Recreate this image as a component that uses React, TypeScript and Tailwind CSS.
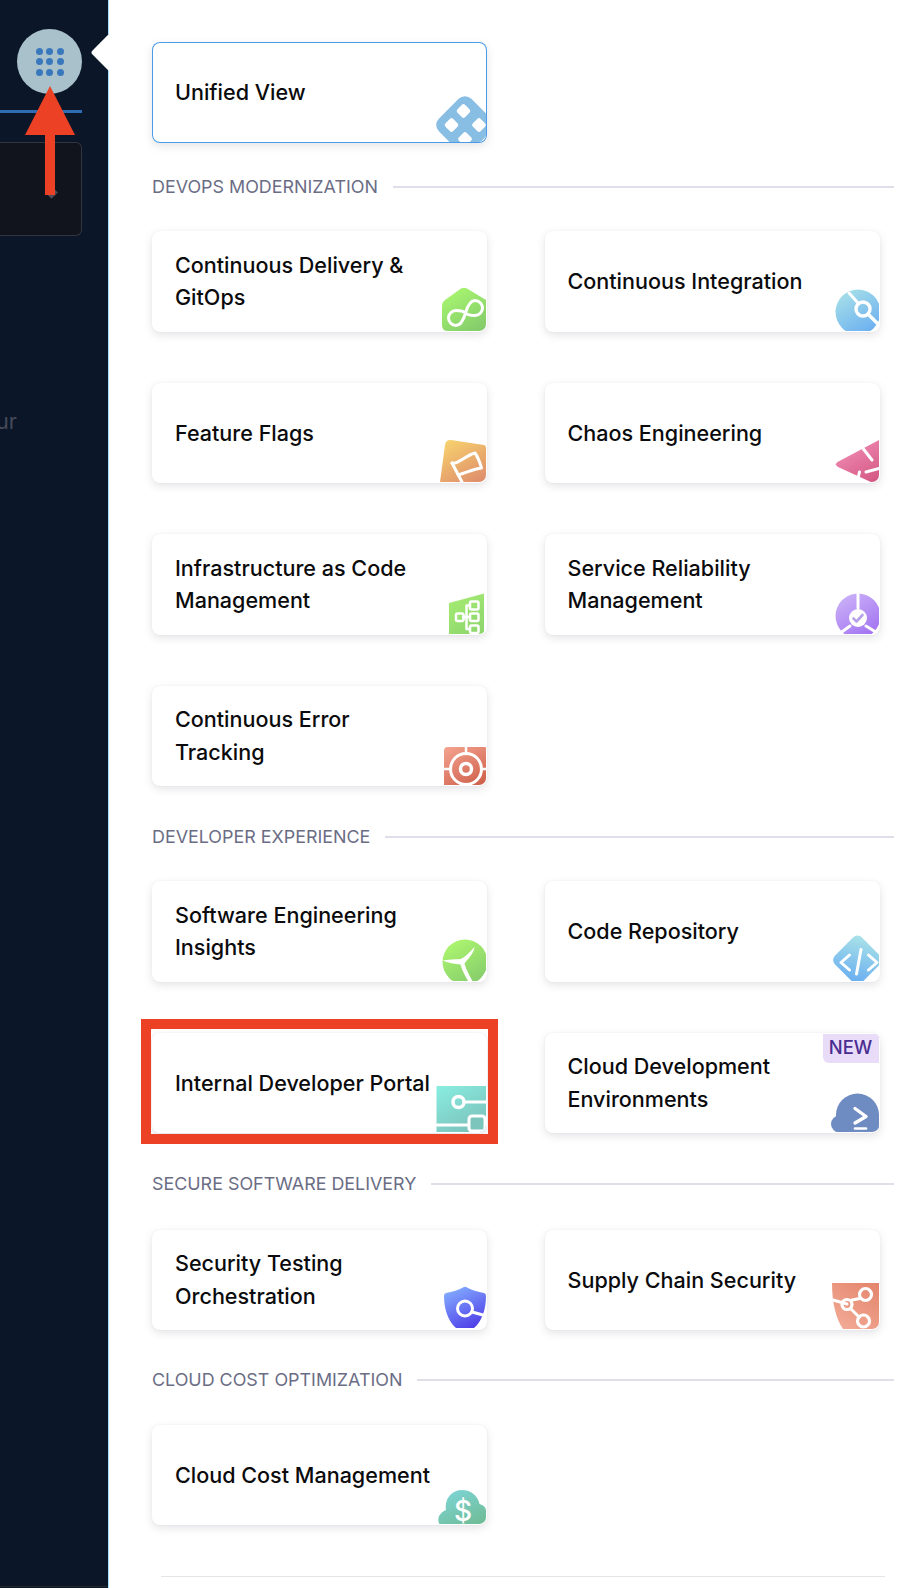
import React from "react";

function Grad({ id, from, to, x1 = 0.2, y1 = 0, x2 = 0.8, y2 = 1 }: { id: string; from: string; to: string; x1?: number; y1?: number; x2?: number; y2?: number }) {
  return (
    <defs>
      <linearGradient id={id} x1={x1} y1={y1} x2={x2} y2={y2}>
        <stop offset="0" stopColor={from} />
        <stop offset="1" stopColor={to} />
      </linearGradient>
    </defs>
  );
}

function Ico({ children }: { children: React.ReactNode }) {
  return (
    <svg
      viewBox="0 0 50 50"
      className="absolute right-[1px] bottom-[1px] h-[50px] w-[50px] rounded-br-[7px]"
      fill="none"
      stroke="#fff"
      strokeLinecap="round"
      strokeLinejoin="round"
    >
      {children}
    </svg>
  );
}

const hole = (cx: number, cy: number) => (
  <rect key={cx + "-" + cy} x={cx - 5.5} y={cy - 5.5} width="11" height="11" rx="2.5" fill="#fff" stroke="none" transform={`rotate(45 ${cx} ${cy})`} />
);

const IconUnified = () => (
  <Ico>
    <rect x="6" y="10" width="46" height="46" rx="9" fill="#88bde4" stroke="none" transform="rotate(45 29 33)" />
    {hole(27.5, 19)}
    {hole(15.5, 33)}
    {hole(43, 33)}
    {hole(29, 47)}
  </Ico>
);

const IconCD = () => (
  <Ico>
    <Grad id="g-cd" from="#a9f770" to="#84cb6b" />
    <path d="M25 7.5 Q28 6 31 7.5 L50 19 V50 H12 Q6 50 6 44 V24 Q6 21 9 19 Z" fill="url(#g-cd)" stroke="none" />
    <path d="M29.5 32 C27 29.5 24 29.5 20 29.5 A7.5 7.5 0 0 0 20 44.5 C25 44.5 27.5 39 29.5 32 C31.5 25 34 19.5 39 19.5 A7.5 7.5 0 0 1 39 34.5 C35 34.5 32 34.5 29.5 32 Z" strokeWidth="3" />
  </Ico>
);

const IconCI = () => (
  <Ico>
    <Grad id="g-ci" from="#a7e0e8" to="#69adf1" />
    <circle cx="29" cy="31" r="22.5" fill="url(#g-ci)" stroke="none" />
    <path d="M20 12 L29 22" strokeWidth="3" />
    <circle cx="34" cy="28" r="7" strokeWidth="3.4" />
    <path d="M39 33 L50 44" strokeWidth="3.4" />
  </Ico>
);

const IconFF = () => (
  <Ico>
    <Grad id="g-ff" from="#f7d16d" to="#df8f6c" />
    <path d="M15 8 L48 13 Q50 13.5 50 16 V50 H4 L9 13 Q10 7.5 15 8 Z" fill="url(#g-ff)" stroke="none" />
    <path d="M16 31 C22 33 28 24 39 21 C42 25 44 31 45.5 36 C37 37 30 41 22 43" strokeWidth="3" />
    <path d="M16 31 L26 50" strokeWidth="3" />
  </Ico>
);

const IconChaos = () => (
  <Ico>
    <Grad id="g-ch" from="#f28fb7" to="#d45a84" />
    <path d="M8.5 30 L50 8 V51 H44 L9 35 Q5 32.5 8.5 30 Z" fill="url(#g-ch)" stroke="none" />
    <path d="M34 16.5 L43 28 M30.5 40 L28 50 M37 40 L50 36.5" strokeWidth="3" />
  </Ico>
);

const IconIaC = () => (
  <Ico>
    <Grad id="g-iac" from="#a5ec72" to="#8ed56e" />
    <path d="M13 19 L48 9.5 V50 H13 Z" fill="url(#g-iac)" stroke="none" />
    <path d="M27 33 H34 M30.5 21.5 V45 M30.5 21.5 H34 M30.5 45 H34" strokeWidth="2.5" />
    <rect x="34" y="17.5" width="8.5" height="8" rx="1.5" strokeWidth="2.5" />
    <rect x="20" y="29.5" width="7.5" height="7.5" rx="1.5" strokeWidth="2.5" />
    <rect x="34" y="29.5" width="8.5" height="7.5" rx="1.5" strokeWidth="2.5" />
    <rect x="34" y="41.5" width="8.5" height="7.5" rx="1.5" strokeWidth="2.5" />
  </Ico>
);

const IconSRM = () => (
  <Ico>
    <Grad id="g-srm" from="#cbb2f8" to="#a06ff1" />
    <circle cx="29" cy="32" r="22.5" fill="url(#g-srm)" stroke="none" />
    <path d="M29 8 V24 M10 50 L21 42 M50 50 L37 42" strokeWidth="3" />
    <circle cx="29" cy="34" r="9" fill="#fff" stroke="none" />
    <path d="M24.5 34.5 L27.5 37.5 L33.5 31" stroke="#b9a3e8" strokeWidth="2.6" />
  </Ico>
);

const IconCET = () => (
  <Ico>
    <Grad id="g-cet" from="#f19e8a" to="#cd5d48" />
    <rect x="8" y="12" width="44" height="42" rx="4" fill="url(#g-cet)" stroke="none" />
    <circle cx="30" cy="34" r="15.5" strokeWidth="3" />
    <circle cx="30" cy="34" r="5.5" strokeWidth="3.5" />
    <path d="M30 12 V19 M30 49 V52 M8 34 H15 M45 34 H50" strokeWidth="2.5" />
  </Ico>
);

const IconSEI = () => (
  <Ico>
    <Grad id="g-sei" from="#aef76f" to="#84cb6b" />
    <circle cx="29" cy="31" r="22.5" fill="url(#g-sei)" stroke="none" />
    <path d="M25 28 C29 26 34 21 38.5 16 C38 22 32 28 28.5 32.5 C30 38 33 44 36.5 50 H32 C29 45 26 39 24.5 33.5 C19 33 12 32 6.5 29.5 C12 28.5 19 28.5 25 28 Z" fill="#fff" stroke="none" />
  </Ico>
);

const IconCode = () => (
  <Ico>
    <Grad id="g-code" from="#a6e0e8" to="#6aaef1" />
    <rect x="9.5" y="10" width="38" height="38" rx="6" fill="url(#g-code)" stroke="none" transform="rotate(45 28.5 29)" />
    <path d="M20.5 24 L12 31.5 L20.5 39 M39.5 24 L48 31.5 L39.5 39 M32 18.5 L27.5 43" strokeWidth="3" />
  </Ico>
);

const IconIDP = () => (
  <Ico>
    <Grad id="g-idp" from="#88eadd" to="#7bbfb9" />
    <rect x="0.5" y="4" width="50" height="47" rx="1" fill="url(#g-idp)" stroke="none" />
    <circle cx="22.5" cy="20" r="5.5" strokeWidth="3.5" />
    <path d="M28 20 H50 M0 43 H33" strokeWidth="3" strokeLinecap="butt" />
    <rect x="33" y="34" width="16" height="15" rx="3" fill="#7cc5bd" strokeWidth="3" />
  </Ico>
);

const IconCDE = () => (
  <Ico>
    <g fill="#6f8cc2" stroke="none">
      <circle cx="28.5" cy="33" r="21.5" />
      <circle cx="10.5" cy="42" r="8.5" />
      <circle cx="45" cy="40" r="9" />
      <rect x="8" y="42" width="44" height="8" />
    </g>
    <path d="M26 26.5 L37 34.5 L26 41" strokeWidth="3.4" />
    <path d="M26 46.5 H37" strokeWidth="2.6" />
  </Ico>
);

const IconSTO = () => (
  <Ico>
    <Grad id="g-sto" from="#84aeff" to="#4f3fe8" x1={0.2} y1={0} x2={0.7} y2={1} />
    <path d="M28 8 Q29 7.5 30 8 C35 11 42 13 48 14 Q50 14.5 50 17 C50 30 46 42 38 49 H20 C12 42 8 30 8 17 Q8 14.5 10 14 C16 13 23 11 28 8 Z" fill="url(#g-sto)" stroke="none" />
    <circle cx="29" cy="29.5" r="7.5" strokeWidth="3" />
    <path d="M36 33 L47 36" strokeWidth="3" />
  </Ico>
);

const IconSCS = () => (
  <Ico>
    <Grad id="g-scs" from="#e4866d" to="#f2aa96" x1={0.9} y1={0} x2={0.2} y2={1} />
    <path d="M3 4 H50 V50 H14 C7 40 3 24 3 4 Z" fill="url(#g-scs)" stroke="none" />
    <path d="M4 21 L18 25 M23 21 L31 19.5 M22 30 L30 38" strokeWidth="3" />
    <circle cx="36.5" cy="15.5" r="6" strokeWidth="3.2" />
    <circle cx="18" cy="25.5" r="5" strokeWidth="3.2" />
    <circle cx="34.5" cy="42" r="6" strokeWidth="3.2" />
  </Ico>
);

const IconCCM = () => (
  <Ico>
    <Grad id="g-ccm" from="#7dd5d6" to="#70bc97" />
    <g fill="url(#g-ccm)" stroke="none">
      <path d="M26 16 C35 16 42 22 43.5 30 C47 31 50 33 50 37 V51 H4 C2 48 2 45 3 42 C5 39 7 37 10 36 C8 25 16 16 26 16 Z" />
    </g>
    <text x="27" y="46.5" textAnchor="middle" fill="#fff" stroke="none" fontFamily="Inter, sans-serif" fontWeight="500" fontSize="28">$</text>
  </Ico>
);

function Card({
  title,
  icon,
  extra,
  badge,
  red,
}: {
  title: React.ReactNode;
  icon: React.ReactNode;
  extra?: string;
  badge?: boolean;
  red?: boolean;
}) {
  return (
    <div className="relative h-[100.5px] w-[335px]">
      <div
        className={`relative flex h-full w-full items-center overflow-hidden rounded-[8px] bg-white pl-[23px] ${
          extra ?? "shadow-[0_3px_8px_rgba(96,97,112,0.17),0_0_2px_rgba(40,41,61,0.06)]"
        }`}
      >
        <span className="w-[265px] whitespace-nowrap text-[21.55px] leading-[32.4px] font-medium text-[#0b0b0d]">{title}</span>
        {badge && (
          <span className="absolute top-[1px] right-[1px] flex h-[29px] w-[56px] items-center justify-center rounded-bl-[6px] bg-[#e8dcf9] text-[18.4px] font-medium text-[#4a2c91]">
            NEW
          </span>
        )}
        {icon}
      </div>
      {red && <div className="absolute -top-[14px] -right-[11px] -bottom-[11px] -left-[11px] border-[10px] border-[#ec4125]" />}
    </div>
  );
}

function Label({ text, className }: { text: string; className: string }) {
  return (
    <div className={`flex h-6 w-[742px] items-center gap-[15px] ${className}`}>
      <span className="whitespace-nowrap text-[17.9px] leading-6 text-[#6b6d85]">{text}</span>
      <div className="h-[2px] flex-1 bg-[#dedfe9]" />
    </div>
  );
}

function Rows({ children }: { children: React.ReactNode }) {
  return <div className="grid grid-cols-[335px_335px] gap-x-[57.5px] gap-y-[51px]">{children}</div>;
}

export default function App() {
  return (
    <div className="relative flex h-[1588px] w-[924px] overflow-hidden bg-white font-['Inter',sans-serif]">
      <aside className="flex h-full w-[109px] shrink-0 flex-col border-r border-[#9fdcff] bg-[#0b1628]">
        <div className="mt-[29px] ml-[17px] flex h-[65px] w-[65px] items-center justify-center rounded-full bg-[#a9c1ca]">
          <div className="grid grid-cols-3 gap-x-[3.5px] gap-y-[3.5px]">
            {Array.from({ length: 9 }).map((_, i) => (
              <div key={i} className="h-[7px] w-[7px] rounded-full bg-[#3a78bd]" />
            ))}
          </div>
        </div>
        <div className="mt-[16px] h-[3px] w-[82px] bg-[#2e6db4]" />
        <div className="mt-[29px] flex h-[94px] w-[82px] items-center justify-end rounded-r-[6px] border border-l-0 border-[#33363f] bg-[#11141c] pt-[6px] pr-[25px]">
          <div className="h-[9px] w-[9px] rotate-45 bg-[#4a4d59]" />
        </div>
        <div className="mt-[172px] -ml-[4px] text-[21.6px] leading-[26px] text-[#454a57]">ur</div>
        <div className="mt-auto mb-[1px] h-[1px] w-full bg-[#25272c]" />
      </aside>

      <main className="flex flex-col pt-[42px] pl-[43px]">
        <Card
          title="Unified View"
          icon={<IconUnified />}
          extra="shadow-[inset_0_0_0_1px_#4a9bea,0_3px_8px_rgba(96,97,112,0.17)]"
        />

        <Label text="DEVOPS MODERNIZATION" className="mt-[32px] mb-[32.5px]" />
        <Rows>
          <Card title={<>Continuous Delivery &amp;<br />GitOps</>} icon={<IconCD />} />
          <Card title="Continuous Integration" icon={<IconCI />} />
          <Card title="Feature Flags" icon={<IconFF />} />
          <Card title="Chaos Engineering" icon={<IconChaos />} />
          <Card title={<>Infrastructure as Code<br />Management</>} icon={<IconIaC />} />
          <Card title={<>Service Reliability<br />Management</>} icon={<IconSRM />} />
          <Card title={<>Continuous Error<br />Tracking</>} icon={<IconCET />} />
        </Rows>

        <Label text="DEVELOPER EXPERIENCE" className="mt-[38.5px] mb-[32.5px]" />
        <Rows>
          <Card title={<>Software Engineering<br />Insights</>} icon={<IconSEI />} />
          <Card title="Code Repository" icon={<IconCode />} />
          <Card title="Internal Developer Portal" icon={<IconIDP />} red />
          <Card title={<>Cloud Development<br />Environments</>} icon={<IconCDE />} badge />
        </Rows>

        <Label text="SECURE SOFTWARE DELIVERY" className="mt-[38.5px] mb-[34px]" />
        <Rows>
          <Card title={<>Security Testing<br />Orchestration</>} icon={<IconSTO />} />
          <Card title="Supply Chain Security" icon={<IconSCS />} />
        </Rows>

        <Label text="CLOUD COST OPTIMIZATION" className="mt-[37.5px] mb-[33px]" />
        <Rows>
          <Card title="Cloud Cost Management" icon={<IconCCM />} />
        </Rows>

        <div className="mt-[51px] ml-[9px] h-[1px] w-[724px] bg-[#e5e5e5]" />
      </main>

      {/* white caret of the flyout, overlapping the sidebar edge */}
      <div className="absolute top-[39px] left-[96px] h-[27px] w-[27px] rotate-45 rounded-[3px] bg-white" />

      {/* red annotation arrow */}
      <svg className="absolute top-[86px] left-[25px] h-[110px] w-[50px]" viewBox="0 0 50 110">
        <path d="M25 0 L50 49 H30 V109 H20 V49 H0 Z" fill="#ec4125" />
      </svg>
    </div>
  );
}
